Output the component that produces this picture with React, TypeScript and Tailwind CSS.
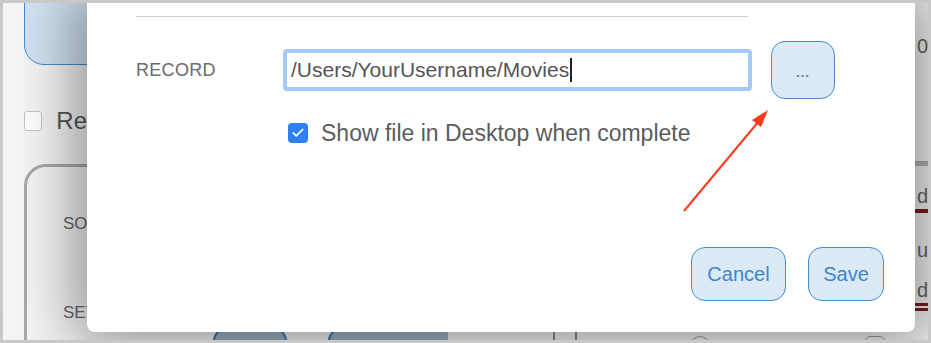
import { Check } from 'lucide-react';

function BackgroundApp() {
  return (
    <div className="flex h-full w-full bg-[#f5f5f5]">
      {/* Left column of the app underneath */}
      <div className="flex w-[84px] shrink-0 flex-col overflow-hidden pl-[21px]">
        <div className="-mt-[30px] h-[92px] w-[90px] shrink-0 rounded-[20px] border border-[#3f8fd2] bg-[#d3e3f3]" />
        <div className="mt-[38px] flex shrink-0 items-center gap-[14px]">
          <div className="h-[20px] w-[20px] rounded-[3px] border border-[#c4c4c4] bg-white" />
          <span className="text-[24px] text-[#555]">Re</span>
        </div>
        <div className="mt-[25px] h-[240px] w-[120px] shrink-0 rounded-[22px] border-[3px] border-[#a9a9a9] pl-[36px] pt-[44px] text-[17px] text-[#666]">
          <div>SO</div>
          <div className="mt-[63px]">SET</div>
        </div>
      </div>

      {/* Middle: controls peeking below the modal */}
      <div className="flex min-w-0 flex-1 flex-col justify-end overflow-hidden">
        <div className="-mb-[16px] flex items-start">
          <div className="ml-[126px] h-[26px] w-[74px] shrink-0 rounded-full border-2 border-[#3f7fb8] bg-[#9fb2c6]" />
          <div className="ml-[41px] h-[26px] w-[120px] shrink-0 rounded-l-full border-2 border-r-0 border-[#3f7fb8] bg-[#9fb2c6]" />
          <div className="ml-[105px] h-[26px] w-[2px] shrink-0 bg-[#8a8a8a]" />
          <div className="ml-[20px] h-[26px] w-[2px] shrink-0 bg-[#8a8a8a]" />
          <div className="ml-[113px] mt-[8px] h-[20px] w-[20px] shrink-0 rounded-full border border-[#9a9a9a]" />
          <div className="ml-[155px] mt-[8px] h-[20px] w-[20px] shrink-0 rounded-[5px] border border-[#9a9a9a]" />
        </div>
      </div>

      {/* Right column peeking out */}
      <div className="flex w-[13px] shrink-0 flex-col overflow-hidden pl-[2px] text-[20px] leading-none text-[#666]">
        <div className="mt-[33px]">0</div>
        <div className="mt-[105px] -ml-[2px] h-[5px] w-[15px] shrink-0 bg-[#b5b5b5]" />
        <div className="mt-[20px]">d</div>
        <div className="mt-[3px] -ml-[2px] h-[4px] w-[15px] shrink-0 bg-[#7a1d1d]" />
        <div className="mt-[27px] whitespace-nowrap">ut</div>
        <div className="mt-[20px]">d</div>
        <div className="mt-[3px] -ml-[2px] h-[3px] w-[15px] shrink-0 bg-[#7a1d1d]" />
        <div className="mt-[2px] -ml-[2px] h-[3px] w-[15px] shrink-0 bg-[#7a1d1d]" />
      </div>
    </div>
  );
}

function DialogButton({ children, className }: { children: React.ReactNode; className?: string }) {
  return (
    <button
      className={`flex items-center justify-center rounded-[14px] border border-[#3f8fd2] bg-[#dce9f6] text-[#3a87cc] ${className ?? ''}`}
    >
      {children}
    </button>
  );
}

export default function App() {
  return (
    <div
      className="h-[343px] w-[931px] bg-[#c8c8c8] p-[3px]"
      style={{ fontFamily: '"Helvetica Neue", "Liberation Sans", Arial, sans-serif' }}
    >
      <div className="relative h-full w-full overflow-hidden">
        <BackgroundApp />

        {/* Modal */}
        <div className="absolute left-[84px] top-0 flex h-[329px] w-[828px] flex-col rounded-b-[8px] bg-white pl-[49px] pr-[31px] shadow-[0_0_60px_14px_rgba(0,0,0,0.4)]">
          <div className="mt-[13px] h-px w-[612px] bg-[#cfcfcf]" />

          <div className="mt-[24px] flex items-center">
            <span className="w-[147px] text-[18px] tracking-[0.3px] text-[#6b6b6b]">RECORD</span>
            <div className="flex h-[42px] w-[469px] items-center rounded-[4px] border-[4px] border-[#a5c8f7] bg-white pl-[4px]">
              <span className="text-[21px] text-[#555]">/Users/YourUsername/Movies</span>
              <span className="ml-[1px] h-[24px] w-[2px] bg-[#222]" />
            </div>
            <DialogButton className="ml-[19px] h-[58px] w-[64px] pt-[6px] text-[13px] font-bold tracking-[1px]">...</DialogButton>
          </div>

          <div className="ml-[152px] mt-[17px] flex items-center gap-[13px]">
            <div className="flex h-[20px] w-[20px] items-center justify-center rounded-[4px] bg-[#2f80f4]">
              <Check size={14} strokeWidth={3} color="#fff" />
            </div>
            <span className="text-[23px] text-[#5c5c5c]">Show file in Desktop when complete</span>
          </div>

          <div className="mt-auto mb-[31px] flex justify-end gap-[22px]">
            <DialogButton className="h-[54px] w-[95px] text-[20px]">Cancel</DialogButton>
            <DialogButton className="h-[54px] w-[76px] text-[20px]">Save</DialogButton>
          </div>

          {/* red annotation arrow */}
          <svg className="absolute left-0 top-0" width="828" height="329" viewBox="0 0 828 329">
            <line x1="597" y1="208" x2="672" y2="118" stroke="#ff3a1c" strokeWidth="2" />
            <polygon points="681,107 665,117 674,124" fill="#ff3a1c" />
          </svg>
        </div>
      </div>
    </div>
  );
}
